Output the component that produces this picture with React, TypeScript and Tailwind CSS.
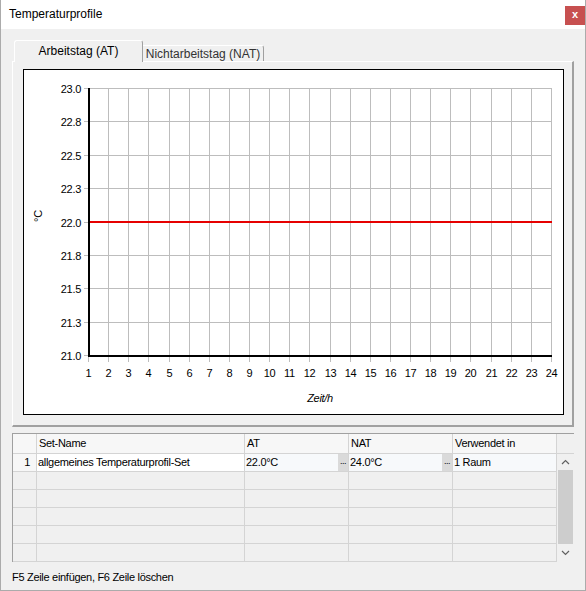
import * as React from 'react'

const hours = Array.from({ length: 24 }, (_, i) => i + 1)
const yLabels = ['23.0', '22.8', '22.5', '22.3', '22.0', '21.8', '21.5', '21.3', '21.0']

// page coordinates of the plot grid
const hx = (h: number) => Math.round(88 + ((h - 1) * 463) / 23)
const vy = (i: number) => Math.round(88 + i * 33.4)

function Chart() {
  return (
    <div className="w-[541px] h-[346px] border border-black bg-white">
      <svg width={539} height={344} className="block">
        <g transform="translate(-24 -70)" fontSize={11} letterSpacing={-0.3}>
          {hours.map((h) => (
            <line key={h} x1={hx(h) + 0.5} x2={hx(h) + 0.5} y1={88} y2={362} stroke="#bdbdbd" />
          ))}
          {yLabels.map((_, i) => (
            <line key={i} x1={84} x2={hx(24) + 1} y1={vy(i) + 0.5} y2={vy(i) + 0.5} stroke="#bdbdbd" />
          ))}
          <rect x={90} y={221} width={462} height={2} fill="#e60000" />
          <rect x={88} y={88} width={2} height={269} fill="#000" />
          <rect x={88} y={355} width={464} height={2} fill="#000" />
          {yLabels.map((t, i) => (
            <text key={t} x={81} y={vy(i) + 5} textAnchor="end" fill="#000">
              {t}
            </text>
          ))}
          {hours.map((h) => (
            <text key={h} x={hx(h) + 0.5} y={377} textAnchor="middle" fill="#000">
              {h}
            </text>
          ))}
          <text x={320} y={402} textAnchor="middle" fontStyle="italic" fill="#000">
            Zeit/h
          </text>
          <text x={37.5} y={220} textAnchor="middle" transform="rotate(-90 37.5 216)" fill="#000">
            °C
          </text>
        </g>
      </svg>
    </div>
  )
}

function Dots() {
  return (
    <div className="w-[10px] shrink-0 bg-[#dadada] flex items-center justify-center text-[9px] tracking-[-0.5px] leading-none pb-[2px]">
      ...
    </div>
  )
}

const cols = ['w-[208px]', 'w-[104px]', 'w-[104px]', 'w-[104px]']

function EmptyRow() {
  return (
    <div className="flex h-[18px]">
      <div className="w-[24px] border-r border-b border-[#d4d4d4]" />
      {cols.map((c, i) => (
        <div key={i} className={`${c} border-r border-b border-[#d4d4d4]`} />
      ))}
    </div>
  )
}

function Grid() {
  return (
    <div className="mt-[6px] w-[562px] border-l border-t border-[#a0a0a0] text-[11px] tracking-[-0.3px]">
      <div className="flex h-[20px] bg-[#f7f7f7]">
        <div className="w-[24px] border-r border-b border-[#d4d4d4]" />
        <div className="w-[208px] border-r border-b border-[#d4d4d4] flex items-center pl-[2px]">Set-Name</div>
        <div className="w-[104px] border-r border-b border-[#d4d4d4] flex items-center pl-[2px]">AT</div>
        <div className="w-[104px] border-r border-b border-[#d4d4d4] flex items-center pl-[2px]">NAT</div>
        <div className="w-[104px] border-r border-b border-[#d4d4d4] flex items-center pl-[2px]">Verwendet in</div>
        <div className="w-[17px] bg-[#f0f0f0] border-b border-[#d4d4d4]" />
      </div>
      <div className="flex">
        <div className="flex flex-col">
          <div className="flex h-[18px]">
            <div className="w-[24px] border-r border-b border-[#d4d4d4] bg-[#f7f7f7] flex items-center justify-end pr-[6px]">1</div>
            <div className="w-[208px] border-r border-b border-[#d4d4d4] bg-white flex items-center pl-[1px]">
              allgemeines Temperaturprofil-Set
            </div>
            <div className="w-[104px] border-r border-b border-[#d4d4d4] bg-[#f7f9fb] flex">
              <span className="flex-1 flex items-center pl-[1px]">22.0°C</span>
              <Dots />
            </div>
            <div className="w-[104px] border-r border-b border-[#d4d4d4] bg-[#f7f9fb] flex">
              <span className="flex-1 flex items-center pl-[1px]">24.0°C</span>
              <Dots />
            </div>
            <div className="w-[104px] border-r border-b border-[#d4d4d4] bg-[#f7f9fb] flex items-center pl-[1px]">1 Raum</div>
          </div>
          <EmptyRow />
          <EmptyRow />
          <EmptyRow />
          <EmptyRow />
          <EmptyRow />
        </div>
        <div className="w-[17px] h-[108px] bg-[#f0f0f0] flex flex-col">
          <div className="h-[16px] flex items-center justify-center">
            <svg width={9} height={6} viewBox="0 0 9 6">
              <polyline points="1,5 4.5,1.5 8,5" fill="none" stroke="#606060" strokeWidth={1.2} />
            </svg>
          </div>
          <div className="h-[74px] mx-[1px] bg-[#cdcdcd]" />
          <div className="h-[18px] flex items-center justify-center">
            <svg width={9} height={6} viewBox="0 0 9 6">
              <polyline points="1,1 4.5,4.5 8,1" fill="none" stroke="#606060" strokeWidth={1.2} />
            </svg>
          </div>
        </div>
      </div>
    </div>
  )
}

export default function App() {
  return (
    <div className="w-[586px] h-[591px] flex flex-col bg-[#f0f0f0] border-x border-b border-[#ababab] font-['Liberation_Sans',Arial,sans-serif] text-black">
      <div className="h-[29px] shrink-0 bg-white flex items-start justify-between">
        <span className="ml-[8px] mt-[6px] text-[12px] leading-[16px]">Temperaturprofile</span>
        <div className="mt-[6px] w-[20px] h-[19px] bg-[#c75050] flex items-center justify-center text-white text-[11px] font-bold leading-none pb-[2px]">
          x
        </div>
      </div>

      <div className="flex-1 flex flex-col px-[11px] pt-[11px]">
        <div className="flex items-end h-[21px] pl-[2px] text-[12px]">
          <div className="relative z-10 -mb-px h-[22px] w-[129px] bg-[#f0f0f0] border-t border-l border-white border-r border-r-[#a0a0a0] rounded-t-[3px] flex items-center justify-center pb-[2px]">
            Arbeitstag (AT)
          </div>
          <div className="h-[16px] w-[121px] border-t border-white border-r border-r-[#a0a0a0] rounded-tr-[3px] flex items-center justify-center text-[#333]">
            Nichtarbeitstag (NAT)
          </div>
        </div>

        <div className="w-[562px] h-[366px] border-t border-l border-white border-r-2 border-b-2 border-r-[#a0a0a0] border-b-[#a0a0a0] pt-[7px] pl-[10px]">
          <Chart />
        </div>

        <Grid />

        <div className="mt-[8px] text-[11px] tracking-[-0.3px] leading-[14px]">F5 Zeile einfügen, F6 Zeile löschen</div>
      </div>
    </div>
  )
}
